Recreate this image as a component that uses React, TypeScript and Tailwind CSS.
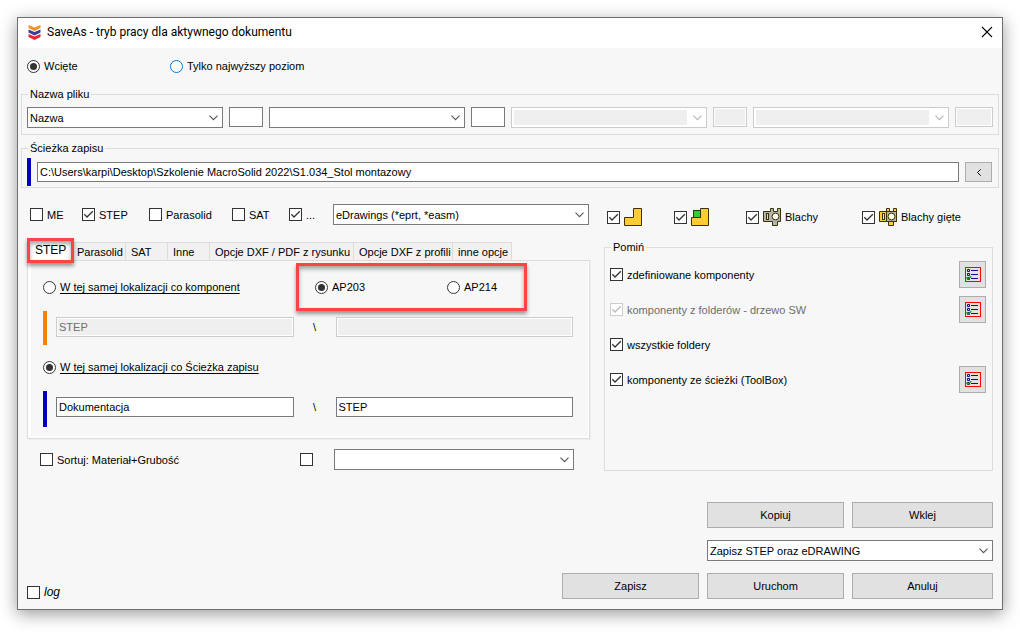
import { useId, type ReactNode } from "react";

function Check({ label, checked = false, disabled = false, name, className = "" }: {
  label?: ReactNode; checked?: boolean; disabled?: boolean; name?: string; className?: string;
}) {
  return (
    <label className={`flex items-center gap-1 whitespace-nowrap ${disabled ? "text-[#6d6d6d]" : ""} ${className}`}>
      <span className="relative grid size-[13px] shrink-0">
        <input
          type="checkbox"
          aria-label={name}
          defaultChecked={checked}
          disabled={disabled}
          className="peer size-[13px] appearance-none border border-[#333] bg-white disabled:border-[#ccc]"
        />
        <svg
          viewBox="0 0 13 13"
          className="pointer-events-none absolute inset-0 hidden size-[13px] text-[#333] peer-checked:block peer-disabled:text-[#bbb]"
        >
          <path d="M2.3 6.3 L5 9 L10.8 3.2" fill="none" stroke="currentColor" strokeWidth="1.3" />
        </svg>
      </span>
      {label}
    </label>
  );
}

function Radio({ label, group, checked = false, blue = false, underline = false, className = "" }: {
  label: string; group: string; checked?: boolean; blue?: boolean; underline?: boolean; className?: string;
}) {
  return (
    <label className={`flex h-3.5 items-center gap-1 whitespace-nowrap ${className}`}>
      <span className="relative grid size-[13px] shrink-0">
        <input
          type="radio"
          name={group}
          defaultChecked={checked}
          className={`peer size-[13px] appearance-none rounded-full border bg-white ${blue ? "border-[#0078d7]" : "border-[#333]"}`}
        />
        <span className="pointer-events-none absolute inset-[3px] hidden rounded-full bg-[#333] peer-checked:block" />
      </span>
      <span className={underline ? "underline underline-offset-2" : ""}>{label}</span>
    </label>
  );
}

function Select({ name, value = "", disabled = false, className = "" }: {
  name: string; value?: string; disabled?: boolean; className?: string;
}) {
  return (
    <div className={`relative h-[21px] border bg-white ${disabled ? "border-[#ccc]" : "border-[#7a7a7a]"} ${className}`}>
      <select
        aria-label={name}
        disabled={disabled}
        className="block h-full w-full appearance-none p-0.5 pr-[19px] outline-none disabled:bg-[#efefef] disabled:bg-clip-content"
      >
        <option>{value}</option>
      </select>
      <svg
        viewBox="0 0 9 6"
        className={`pointer-events-none absolute top-[7px] right-1 h-1.5 w-[9px] ${disabled ? "text-[#b5b5b5]" : "text-[#555]"}`}
      >
        <path d="M0.5 0.7 L4.5 4.7 L8.5 0.7" fill="none" stroke="currentColor" strokeWidth="1.1" />
      </svg>
    </div>
  );
}

function Field({ name, value = "", disabled = false, className = "" }: {
  name: string; value?: string; disabled?: boolean; className?: string;
}) {
  return (
    <input
      type="text"
      aria-label={name}
      defaultValue={value}
      disabled={disabled}
      className={`block h-5 min-w-0 border border-[#7a7a7a] bg-white px-0.5 outline-none disabled:border-[#ccc] disabled:bg-[#efefef] disabled:text-[#6d6d6d] disabled:shadow-[inset_0_0_0_1px_#ffffff] ${className}`}
    />
  );
}

function Group({ legend, children, className = "" }: { legend: string; children: ReactNode; className?: string }) {
  return (
    <fieldset className={`min-w-0 border border-[#dcdcdc] ${className}`}>
      <legend className="ml-1.5 h-[13px] px-0.5 leading-[13px]">{legend}</legend>
      {children}
    </fieldset>
  );
}

function PushButton({ children, className = "" }: { children: ReactNode; className?: string }) {
  return (
    <button type="button" className={`h-[26px] border border-[#adadad] bg-[#e1e1e1] ${className}`}>
      {children}
    </button>
  );
}

function Logo() {
  const rows = [
    { y: 0, color: "#f39325" },
    { y: 4.5, color: "#3b3f9c" },
    { y: 9, color: "#ee2430" },
  ];
  return (
    <svg viewBox="0 0 13 15" className="h-[15px] w-[13px]" aria-hidden="true">
      {rows.map((r) => (
        <path key={r.color} transform={`translate(0 ${r.y})`} d="M0.5 0 L6.5 2.6 L12.5 0 V3 L6.5 6 L0.5 3 Z" fill={r.color} />
      ))}
    </svg>
  );
}

function PartIcon({ cube = false }: { cube?: boolean }) {
  return (
    <svg viewBox="0 0 18 18" className="size-[18px]" aria-hidden="true">
      <path d="M0.5 17.5 V9.5 H9.5 V0.5 H17.5 V17.5 Z" fill="#ffcc33" stroke="#3a3200" />
      {cube && <rect x="2.5" y="2.5" width="7" height="7" fill="#33cc33" stroke="#3a3200" />}
    </svg>
  );
}

function SheetIcon({ bent = false }: { bent?: boolean }) {
  return (
    <svg viewBox="0 0 18 18" className="size-[18px]" aria-hidden="true" stroke="#3a3200">
      <path
        d="M0.5 3.5 H7.5 V0.5 H10.5 V3.5 H14.5 V0.5 H17.5 V13.5 H14.5 V17.5 H9.5 V13.5 H0.5 Z"
        fill={bent ? "#ffcc33" : "#b3b3b3"}
      />
      {bent && <rect x="7.5" y="3.5" width="10" height="10" fill="#b3b3b3" />}
      <rect x="3.5" y="5.5" width="2" height="6" fill={bent ? "#ffe9a8" : "#d8d8c8"} />
      <circle cx="12.5" cy="8.5" r="3.4" fill="#fffbe8" />
    </svg>
  );
}

function ListButton({ name }: { name: string }) {
  return (
    <button type="button" aria-label={name} className="grid size-[27px] place-items-center border border-[#adadad] bg-[#e1e1e1]">
      <svg viewBox="0 0 16 15" className="h-[15px] w-4" aria-hidden="true" fill="none">
        <rect x="0.5" y="0.5" width="15" height="14" stroke="#ff0000" />
        <path d="M6 3.5 H13 M6 7.5 H13 M6 11.5 H13" stroke="#1a0a80" />
        <path d="M2.5 2.5 H4.5 V4.5 H2.5 Z M2.5 6.5 H4.5 V8.5 H2.5 Z M2.5 10.5 H4.5 V12.5 H2.5 Z" stroke="#1a0a80" />
        <path d="M1.5 10.5 L3 12.3 L6.3 9.3" stroke="#0aa01e" strokeWidth="1.4" />
      </svg>
    </button>
  );
}

const tabs = [
  { label: "Parasolid", width: "w-[54px]" },
  { label: "SAT", width: "w-[42px]" },
  { label: "Inne", width: "w-[42px]" },
  { label: "Opcje DXF / PDF z rysunku", width: "w-[144px]" },
  { label: "Opcje DXF z profili", width: "w-[99px]" },
  { label: "inne opcje", width: "w-[59px]" },
];

const skipped = [
  { label: "zdefiniowane komponenty", button: true },
  { label: "komponenty z folderów - drzewo SW", button: true, disabled: true },
  { label: "wszystkie foldery", button: false },
  { label: "komponenty ze ścieżki (ToolBox)", button: true },
];

export default function App() {
  const mode = useId();
  const place = useId();
  const protocol = useId();
  return (
    <div className="min-h-screen bg-white p-[17px] font-['Liberation_Sans',Arial,sans-serif] text-[11px] leading-[14px] text-black">
      <main className="border border-[#6e6e6e] bg-[#f7f7f7] shadow-[0_4px_16px_rgba(0,0,0,0.4)]">
        <header className="flex h-[30px] items-center gap-1.5 bg-white pr-[9px] pb-0.5 pl-2.5">
          <Logo />
          <h1 className="flex-1 font-[Roboto,'Open_Sans',sans-serif] text-[12px]">SaveAs - tryb pracy dla aktywnego dokumentu</h1>
          <button type="button" aria-label="Zamknij" className="grid size-3 place-items-center">
            <svg viewBox="0 0 12 12" className="size-3">
              <path d="M1 1 L11 11 M11 1 L1 11" stroke="#000" strokeWidth="1.1" />
            </svg>
          </button>
        </header>

        <div className="flex pt-[11px] pl-[9px]">
          <Radio group={mode} label="Wcięte" checked className="w-[143px]" />
          <Radio group={mode} label="Tylko najwyższy poziom" blue />
        </div>

        <div className="mt-[15px] flex flex-col gap-[7px] px-[3px]">
          <Group legend="Nazwa pliku">
            <div className="flex gap-1.5 px-[5px] pt-1.5 pb-1.5">
              <Select name="Człon 1" value="Nazwa" className="flex-1" />
              <Field name="Separator 1" className="w-[34px]" />
              <Select name="Człon 2" className="flex-1" />
              <Field name="Separator 2" className="w-[34px]" />
              <Select name="Człon 3" disabled className="flex-1" />
              <Field name="Separator 3" disabled className="w-[34px]" />
              <Select name="Człon 4" disabled className="flex-1" />
              <Field name="Separator 4" disabled className="w-[38px]" />
            </div>
          </Group>
          <Group legend="Ścieżka zapisu">
            <div className="flex items-center gap-1.5 pt-[3px] pr-1.5 pb-px pl-[5px]">
              <span className="h-7 w-1 bg-[#0000c0]" />
              <Field name="Ścieżka zapisu" value="C:\Users\karpi\Desktop\Szkolenie MacroSolid 2022\S1.034_Stol montazowy" className="flex-1" />
              <button type="button" aria-label="Wybierz folder" className="grid h-5 w-[27px] place-items-center border border-[#adadad] bg-[#e1e1e1]">
                <svg viewBox="0 0 4 7" className="h-[7px] w-1">
                  <path d="M3.7 0.3 L0.5 3.5 L3.7 6.7" fill="none" stroke="#000" />
                </svg>
              </button>
            </div>
          </Group>
        </div>

        <div className="mt-4 grid grid-cols-[563fr_389fr] gap-3.5 px-[9px]">
          <section className="min-w-0">
            <div className="flex items-center pr-px pl-[3px]">
              <Check label="ME" className="w-[52px]" />
              <Check label="STEP" checked className="w-[67px]" />
              <Check label="Parasolid" className="w-[83px]" />
              <Check label="SAT" className="w-[57px]" />
              <Check label="..." checked className="w-11" />
              <Select name="Format" value="eDrawings (*eprt, *easm)" className="flex-1" />
            </div>

            <div role="tablist" className="mt-[15px] flex h-5 items-end">
              <button type="button" role="tab" aria-selected="true" className="relative z-10 -mr-0.5 h-5 w-[47px] bg-white pl-2 text-left text-[12px]">
                STEP
                <span className="absolute inset-x-0 -top-0.5 h-[25px] border-[3px] border-[#fb4444] shadow-[0_3px_4px_rgba(0,0,0,0.4),inset_0_3px_4px_rgba(0,0,0,0.35)]" />
              </button>
              {tabs.map((t) => (
                <button key={t.label} type="button" role="tab" aria-selected="false" className={`h-[18px] border-t border-r border-[#dcdcdc] bg-[#f1f1f1] pl-[5px] text-left whitespace-nowrap ${t.width}`}>
                  {t.label}
                </button>
              ))}
            </div>

            <div role="tabpanel" className="border border-[#dcdcdc] shadow-[1px_1px_1px_#efefef]">
              <div className="border-r border-b-2 border-l-[3px] border-white pt-0.5 pr-[15px] pb-[9px] pl-3">
                <div className="flex h-12 items-center">
                  <Radio group={place} label="W tej samej lokalizacji co komponent" underline className="w-[253px]" />
                  <div className="flex h-12 w-[231px] items-center border-[3px] border-[#fb4444] pl-4 shadow-[0_3px_4px_rgba(0,0,0,0.4),inset_0_3px_4px_rgba(0,0,0,0.35)]">
                    <Radio group={protocol} label="AP203" checked className="w-[132px]" />
                    <Radio group={protocol} label="AP214" />
                  </div>
                </div>
                <div className="flex items-start">
                  <span className="h-[34px] w-1 bg-[#ff8000]" />
                  <Field name="Folder komponentu" value="STEP" disabled className="mt-1.5 ml-[9px] flex-1" />
                  <span className="mt-[9px] w-[42px] text-center">\</span>
                  <Field name="Podfolder komponentu" disabled className="mt-1.5 flex-1" />
                </div>
                <Radio group={place} label="W tej samej lokalizacji co Ścieżka zapisu" checked underline className="mt-[15px]" />
                <div className="mt-[17px] flex items-start">
                  <span className="h-9 w-1 bg-[#0000c0]" />
                  <Field name="Folder zapisu" value="Dokumentacja" className="mt-1.5 ml-[9px] flex-1" />
                  <span className="mt-[9px] w-[42px] text-center">\</span>
                  <Field name="Podfolder zapisu" value="STEP" className="mt-1.5 flex-1" />
                </div>
              </div>
            </div>

            <div className="mt-2.5 flex items-center pr-4 pl-[13px]">
              <Check label="Sortuj: Materiał+Grubość" className="w-[260px]" />
              <Check name="Dodatkowe sortowanie" className="w-[34px]" />
              <Select name="Sortowanie" className="flex-1" />
            </div>
          </section>

          <section className="min-w-0">
            <div className="flex h-[26px] items-center pl-[3px]">
              <Check label={<PartIcon />} name="Części" checked className="w-[67px]" />
              <Check label={<PartIcon cube />} name="Części wieloobiektowe" checked className="w-[72px]" />
              <Check label={<><SheetIcon />Blachy</>} checked className="w-[116px]" />
              <Check label={<><SheetIcon bent />Blachy gięte</>} checked />
            </div>
            <Group legend="Pomiń" className="mt-[11px]">
              <div className="flex flex-col gap-2 pt-[7px] pr-1.5 pb-[77px] pl-[5px]">
                {skipped.map((s) => (
                  <div key={s.label} className="flex h-[27px] items-center justify-between">
                    <Check label={s.label} checked disabled={s.disabled} />
                    {s.button && <ListButton name={`Lista: ${s.label}`} />}
                  </div>
                ))}
              </div>
            </Group>
          </section>
        </div>

        <footer className="mt-[31px] flex items-end justify-between px-[9px] pb-2.5">
          <Check label={<i className="text-[12px]">log</i>} />
          <div className="grid grid-cols-[137px_137px_141px] gap-x-2 gap-y-3">
            <PushButton className="col-start-2">Kopiuj</PushButton>
            <PushButton>Wklej</PushButton>
            <Select name="Zestaw" value="Zapisz STEP oraz eDRAWING" className="col-span-2 col-start-2" />
            <PushButton className="col-start-1">Zapisz</PushButton>
            <PushButton>Uruchom</PushButton>
            <PushButton>Anuluj</PushButton>
          </div>
        </footer>
      </main>
    </div>
  );
}
